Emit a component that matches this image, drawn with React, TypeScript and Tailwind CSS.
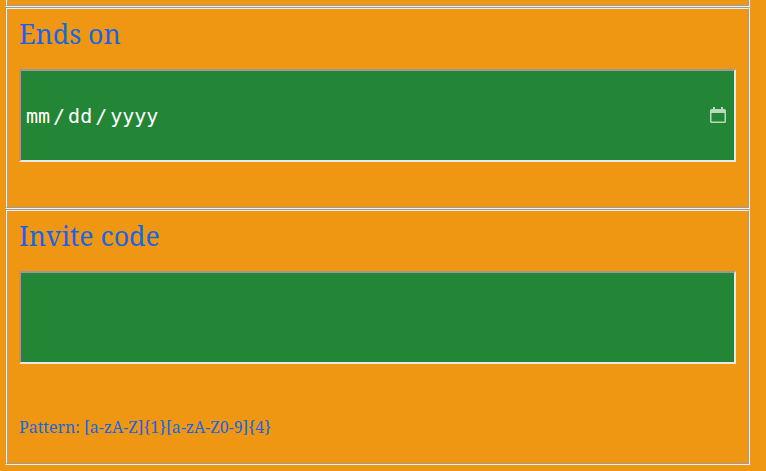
function CalendarIcon() {
  return (
    <svg className="-mt-0.5" width="16" height="16" viewBox="0 0 16 16" fill="#b8d8bf">
      <path fillRule="evenodd" d="M3 0h2v2h6V0h2v2h1.5A1.5 1.5 0 0 1 16 3.500V14.500A1.500 1.500 0 0 1 14.500 16H1.500A1.500 1.500 0 0 1 0 14.500V3.500A1.500 1.500 0 0 1 1.500 2H3zM1.500 6v8.500h13V6z" />
    </svg>
  );
}

export default function App() {
  return (
    <div className="h-[471px] w-[766px] overflow-hidden bg-[#ef9612] pl-[5px] font-['Noto_Serif','Droid_Serif','DejaVu_Serif',serif] text-[#1a66e0]">
      <div className="h-[7px] w-[745px] border-2 border-t-0 border-[#f0f0f0] [border-style:groove]" />
      <section className="h-[202px] w-[745px] border-2 border-[#f0f0f0] [border-style:groove] px-3">
        <h2 className="mt-[6px] h-[36px] text-[26.67px] leading-[38px]">Ends on</h2>
        <div className="mt-[18px] flex h-[93px] w-[717px] items-center border-2 border-t-[#999] border-l-[#999] border-r-[#e8e8e8] border-b-[#e8e8e8] bg-[#238636] pl-[5px] pr-2 font-['DejaVu_Sans_Mono',monospace] text-[20px] text-white">
          <span>mm</span>
          <span className="w-[18px] pl-[3px]">/</span>
          <span>dd</span>
          <span className="w-[18px] pl-[3px]">/</span>
          <span className="grow">yyyy</span>
          <CalendarIcon />
        </div>
      </section>
      <section className="h-[256px] w-[745px] border-2 border-[#f0f0f0] [border-style:groove] px-3">
        <h2 className="mt-[6px] h-[36px] text-[26.67px] leading-[38px]">Invite code</h2>
        <div className="mt-[18px] h-[93px] w-[717px] border-2 border-t-[#999] border-l-[#999] border-r-[#e8e8e8] border-b-[#e8e8e8] bg-[#238636]" />
        <p className="mt-[51px] text-[16px] leading-6">Pattern: [a-zA-Z]{"{1}"}[a-zA-Z0-9]{"{4}"}</p>
      </section>
    </div>
  );
}
